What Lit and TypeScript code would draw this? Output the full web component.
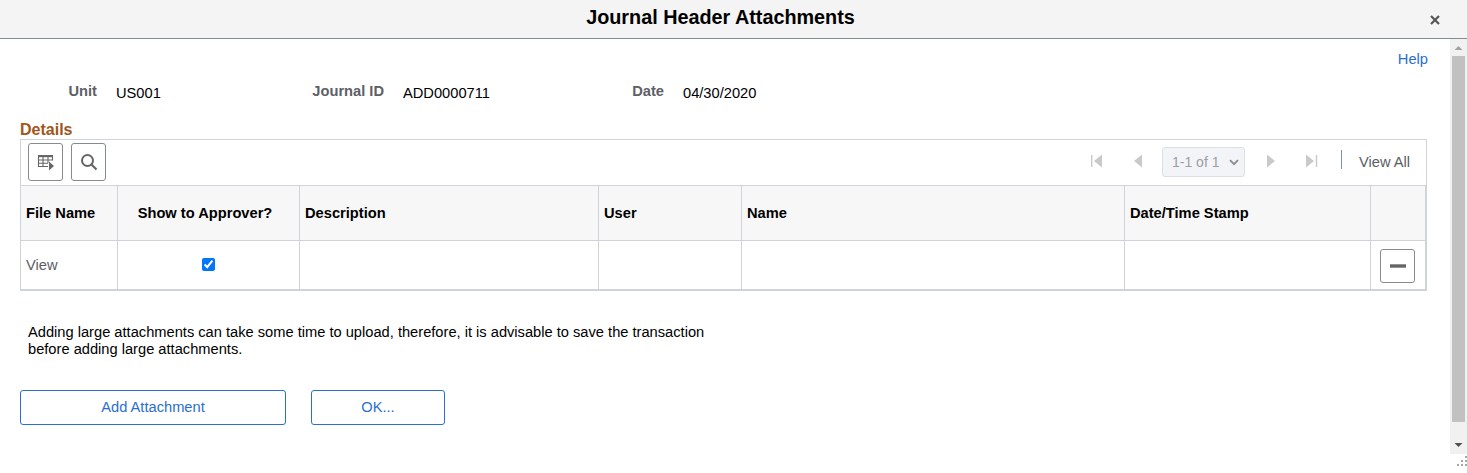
import { LitElement, html, css, svg } from "lit";
import { customElement } from "lit/decorators.js";

const COLS = ["File Name", "Show to Approver?", "Description", "User", "Name", "Date/Time Stamp", ""];

@customElement("app-root")
export class AppRoot extends LitElement {
  static styles = css`
    :host {
      display: flex;
      flex-direction: column;
      width: 1467px;
      height: 473px;
      background: #fff;
      font-family: "Liberation Sans", Arial, sans-serif;
      font-size: 14.67px;
      color: #000;
      overflow: hidden;
    }
    * { box-sizing: border-box; }
    .titlebar {
      flex: none;
      height: 39px;
      background: #f4f4f4;
      border-bottom: 1px solid #858b92;
      display: flex;
      align-items: center;
      padding: 0 26px 4px 0;
      position: relative;
    }
    .title { flex: 1; text-align: center; font-size: 19.8px; font-weight: 700; line-height: 24px; }
    .close { position: absolute; left: 1429px; top: 14px; width: 12px; height: 12px; display: block; }
    .main { flex: none; height: 415px; display: flex; }
    .content { width: 1450px; padding: 0 23px 0 20px; display: flex; flex-direction: column; }
    .help-row { height: 30px; display: flex; justify-content: flex-end; padding: 12px 0 0; margin-right: -1px; }
    .help { color: #2a6fce; line-height: 16px; }
    .fields {
      display: grid;
      grid-template-columns: 77px 19px 196px 72px 19px 229px 32px 19px 1fr;
      height: 50px;
      align-items: start;
      padding-top: 14px;
    }
    .lbl { font-weight: 700; color: #5d6066; text-align: right; line-height: 16px; white-space: nowrap; }
    .lbl.jid { grid-column: 4; }
    .lbl.date { grid-column: 7; }
    .val { line-height: 16px; margin-top: 2px; white-space: nowrap; }
    .val.unit { grid-column: 3; }
    .val.jid { grid-column: 6; }
    .val.dt { grid-column: 9; }
    .section { color: #a0561a; font-weight: 700; font-size: 16px; line-height: 16px; height: 20px; padding-top: 3px; }
    .box { width: 1407px; height: 152px; border: 1px solid #d0d3d9; display: flex; flex-direction: column; }
    .toolbar {
      height: 46px;
      flex: none;
      border-bottom: 1px solid #d0d3d9;
      display: flex;
      align-items: flex-start;
      padding: 3px 0 0 7px;
      gap: 8px;
    }
    .ibtn {
      width: 35px;
      height: 38px;
      border: 1px solid #868b92;
      border-radius: 3px;
      background: #fff;
      display: flex;
      align-items: center;
      justify-content: center;
      padding: 0;
    }
    .pager {
      margin-left: auto;
      width: 349px;
      display: flex;
      align-items: center;
      height: 38px;
      position: relative;
    }
    .pg { display: block; flex: none; margin-top: -2px; }
    .sp { flex: none; }
    .sp.a { width: 14px; }
    .sp.b { width: 31px; }
    .sp.c { width: 19px; }
    .sp.d { width: 22px; }
    .sp.e { width: 30px; }
    .sp.f { width: 23px; }
    .sp.g { width: 17px; }
    .sel {
      flex: none;
      width: 83px;
      height: 30px;
      border: 1px solid #dcdfe4;
      border-radius: 3px;
      background: #f3f4f7;
      color: #9b9fa6;
      font-size: 14px;
      display: flex;
      align-items: center;
      padding-left: 9px;
      gap: 10px;
    }
    .sep { flex: none; width: 1px; height: 19px; background: #7c95ab; margin-top: -6px; }
    .viewall { color: #5a5d63; white-space: nowrap; }
    .grid {
      display: grid;
      grid-template-columns: 97px 182px 299px 143px 383px 246px 55px;
      grid-template-rows: 55px 49px;
    }
    .cell { border-right: 1px solid #d0d3d9; border-bottom: 1px solid #d0d3d9; display: flex; align-items: center; padding-left: 5px; }
    .head { background: #f7f7f7; font-weight: 700; padding-bottom: 1px; white-space: nowrap; }
    .head.center { justify-content: center; padding: 0 7px 1px 0; }
    .link { color: #5a5d63; padding-bottom: 1px; }
    .check { justify-content: center; padding: 0 0 2px 0; }
    .check input { margin: 0; width: 13px; height: 13px; }
    .act { padding: 0 0 0 9px; }
    .act .ibtn { height: 34px; margin-top: 1px; }
    .note { margin: 33px 0 0 8px; width: 700px; line-height: 17px; height: 34px; }
    .actions { display: flex; gap: 25px; margin-top: 32px; }
    .btn {
      height: 35px;
      border: 1px solid #2a6fce;
      border-radius: 3px;
      background: #fff;
      color: #2a6fce;
      font: inherit;
      padding: 0 0 2px;
    }
    .btn.add { width: 266px; }
    .btn.ok { width: 134px; }
    .sb { width: 17px; height: 415px; background: #f1f1f1; display: flex; flex-direction: column; align-items: center; }
    .sb-up { height: 17px; display: block; flex: none; }
    .thumb { width: 13px; height: 366px; background: #c1c1c1; flex: none; }
    .sb-down { margin-top: auto; display: block; flex: none; }
    .foot { flex: 1; display: flex; justify-content: flex-end; }
  `;

  private tri(w: number, d: string, fill = "#c9c9c9", h = 16) {
    return html`<svg class="pg" width=${w} height=${h} viewBox="0 0 ${w} ${h}">${svg`<path d=${d} fill=${fill}></path>`}</svg>`;
  }

  render() {
    return html`
      <div class="titlebar">
        <div class="title">Journal Header Attachments</div>
        <svg class="close" viewBox="0 0 12 12"><path d="M2 2 L10 10 M10 2 L2 10" stroke="#555" stroke-width="2.2" fill="none"></path></svg>
      </div>
      <div class="main">
        <div class="content">
          <div class="help-row"><span class="help">Help</span></div>
          <div class="fields">
            <span class="lbl">Unit</span><span class="val unit">US001</span>
            <span class="lbl jid">Journal ID</span><span class="val jid">ADD0000711</span>
            <span class="lbl date">Date</span><span class="val dt">04/30/2020</span>
          </div>
          <div class="section">Details</div>
          <div class="box">
            <div class="toolbar">
              <button class="ibtn" aria-label="Personalize">
                <svg width="18" height="18" viewBox="0 0 18 18">
                  <path d="M1 2 H16 V4.2 H1 Z" fill="#666"></path>
                  <path d="M1.5 4 V13.5 H11 M1.5 7 H15.5 M1.5 10.2 H11 M6 4 V13.5 M11 4 V10 M15.5 4 V7.5" stroke="#666" stroke-width="1.1" fill="none"></path>
                  <path d="M12 8.5 L17 13 L12 17.5 Z" fill="#666"></path>
                </svg>
              </button>
              <button class="ibtn" aria-label="Find">
                <svg width="18" height="18" viewBox="0 0 18 18">
                  <circle cx="7.5" cy="7.5" r="5.5" stroke="#666" stroke-width="2" fill="none"></circle>
                  <path d="M11.5 11.5 L16.5 16.5" stroke="#666" stroke-width="2.2" fill="none"></path>
                </svg>
              </button>
              <div class="pager">
                <span class="sp a"></span>
                ${this.tri(12, "M0 2 H1.4 V14 H0 Z M11 1.5 V14.5 L3 8 Z")}
                <span class="sp b"></span>
                ${this.tri(9, "M8 1.5 V14.5 L0 8 Z")}
                <span class="sp c"></span>
                <div class="sel"><span>1-1 of 1</span>
                  <svg width="10" height="7" viewBox="0 0 10 7"><path d="M1 1.2 L5 5.2 L9 1.2" stroke="#8a8d93" stroke-width="1.9" fill="none"></path></svg>
                </div>
                <span class="sp d"></span>
                ${this.tri(9, "M0 1.5 V14.5 L8 8 Z")}
                <span class="sp e"></span>
                ${this.tri(12, "M0 1.5 V14.5 L8 8 Z M9.8 2 H11.2 V14 H9.8 Z")}
                <span class="sp f"></span>
                <span class="sep"></span>
                <span class="sp g"></span>
                <span class="viewall">View All</span>
              </div>
            </div>
            <div class="grid">
              ${COLS.map((c, i) => html`<div class="cell head ${i === 1 ? "center" : ""}">${c}</div>`)}
              <div class="cell link">View</div>
              <div class="cell check"><input type="checkbox" checked /></div>
              <div class="cell"></div>
              <div class="cell"></div>
              <div class="cell"></div>
              <div class="cell"></div>
              <div class="cell act">
                <button class="ibtn" aria-label="Delete row">
                  <svg width="16" height="4" viewBox="0 0 16 4"><rect width="16" height="3.4" y="0.3" fill="#666"></rect></svg>
                </button>
              </div>
            </div>
          </div>
          <div class="note">Adding large attachments can take some time to upload, therefore, it is advisable to save the transaction before adding large attachments.</div>
          <div class="actions">
            <button class="btn add">Add Attachment</button>
            <button class="btn ok">OK...</button>
          </div>
        </div>
        <div class="sb">
          <svg class="sb-up" width="17" height="17" viewBox="0 0 17 17"><path d="M4.5 11 L8.5 7 L12.5 11 Z" fill="#a3a3a3"></path></svg>
          <div class="thumb"></div>
          <svg class="sb-down" width="17" height="17" viewBox="0 0 17 17"><path d="M4.5 6 L12.5 6 L8.5 10 Z" fill="#505050"></path></svg>
        </div>
      </div>
      <div class="foot">
        <svg width="17" height="19" viewBox="0 0 17 19">
          <g fill="#a8a8a8">
            <rect x="15" y="2" width="2" height="2"></rect>
            <rect x="11" y="6" width="2" height="2"></rect><rect x="15" y="6" width="2" height="2"></rect>
            <rect x="7" y="10" width="2" height="2"></rect><rect x="11" y="10" width="2" height="2"></rect><rect x="15" y="10" width="2" height="2"></rect>
          </g>
        </svg>
      </div>
    `;
  }
}
